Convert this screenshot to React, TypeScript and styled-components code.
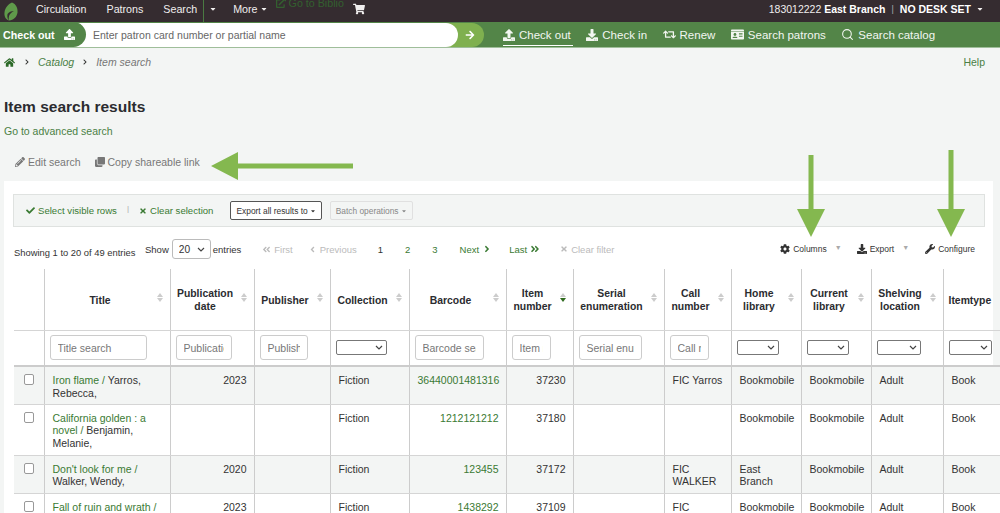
import React from "react";
import styled, { createGlobalStyle } from "styled-components";
import {
  FaHome, FaUpload, FaDownload, FaRetweet, FaIdCard, FaPencilAlt, FaClone, FaCheck, FaTimes,
  FaCog, FaWrench, FaAngleDoubleLeft, FaAngleLeft, FaAngleRight, FaAngleDoubleRight,
  FaShoppingCart, FaExternalLinkAlt, FaArrowRight, FaCaretDown, FaChevronRight,
} from "react-icons/fa";
import { Search } from "lucide-react";

const chevron = `url("data:image/svg+xml,%3Csvg xmlns='http://www.w3.org/2000/svg' width='8' height='5' viewBox='0 0 8 5'%3E%3Cpath d='M1 1l3 3 3-3' fill='none' stroke='%23444' stroke-width='1.2'/%3E%3C/svg%3E")`;

const Global = createGlobalStyle`
  html, body { margin: 0; height: 513px; overflow: hidden; background: #f3f5f4; }
  body { font-family: "Liberation Sans", Arial, sans-serif; font-size: 10.5px; color: #333; }
  * { box-sizing: border-box; }
`;

const Page = styled.div`position: relative; width: 1000px; height: 513px; overflow: hidden;`;

const Nav = styled.nav`
  height: 22px; background: #352c30; color: #f0eeee; display: flex; align-items: center;
  font-size: 10.7px; padding: 0 0 4px 4px;
`;
const Logo = styled.svg`margin-top: 4px; flex: none;`;
const NavItem = styled.span<{ $ml?: number }>`margin-left: ${p => p.$ml ?? 0}px; display: inline-flex; align-items: center; gap: 2px;`;
const NavDivider = styled.span`width: 1px; height: 22px; background: #4a7a42; margin: 4px 0 0 6px;`;
const BiblioLink = styled.span`
  color: #33602f; margin-left: 8px; align-self: flex-start; margin-top: -3px;
  display: inline-flex; align-items: center; gap: 3px; font-size: 10.7px;
`;
const NavRight = styled.div`margin-left: auto; display: flex; align-items: center; padding-right: 16px; font-size: 10.5px;`;
const Strong = styled.b`font-weight: 700; color: #fff;`;
const Pipe = styled.span`margin: 0 6px; color: #aaa; font-size: 9px;`;

const SearchBar = styled.div`
  height: 26px; background: #538548; border-bottom: 1px solid #9fbe9a; display: flex; align-items: center;
`;
const CheckTab = styled.div`
  width: 86px; height: 25px; background: #538548; color: #fff; font-weight: 700; font-size: 10.7px;
  border-radius: 0 13px 13px 0; display: flex; align-items: center; gap: 9px; padding-left: 3px;
  position: relative; z-index: 2; flex: none;
`;
const InputPill = styled.div`
  width: 384px; margin-left: -12px; height: 24px; background: #fff; border-radius: 0 13px 13px 0;
  color: #666; font-size: 10.5px; display: flex; align-items: center; padding-left: 19px;
  position: relative; z-index: 1; flex: none;
`;
const Go = styled.div`
  width: 38px; margin-left: -12px; height: 24px; background: #7fb04f; border-radius: 0 12px 12px 0; color: #fff;
  display: flex; align-items: center; justify-content: flex-end; padding-right: 9px; flex: none;
`;
const Tabs = styled.div`display: flex; margin-left: 19px; gap: 13.5px;`;
const Tab = styled.span<{ $active?: boolean }>`
  color: #f2f6f1; font-size: 11.5px; display: inline-flex; align-items: center; gap: 4px; height: 21px; padding: 0 2px 0 0; margin-top: 1px;
  border-bottom: 1px solid ${p => (p.$active ? "#fff" : "transparent")};
`;

const Crumbs = styled.div`
  height: 49px; display: flex; justify-content: space-between; padding: 7px 15px 0 4px; align-items: flex-start;
`;
const CrumbRow = styled.div`display: flex; align-items: center; gap: 8px; height: 14px; font-style: italic; color: #777;`;
const CrumbSep = styled.span`color: #333; display: inline-flex; font-size: 6px;`;
const GreenI = styled.span`color: #4a7f44;`;
const HomeIcon = styled.span`color: #2c6a28; display: inline-flex; font-size: 11px; margin-right: 1px;`;
const Help = styled.span`color: #4a7f44; margin-top: 1px;`;

const Title = styled.h1`margin: 0 0 0 4px; font-size: 15.5px; line-height: 20px; font-weight: 700; color: #2b2c30;`;
const AdvLink = styled.a`display: block; margin: 7px 0 0 4px; color: #4a7f44; line-height: 14px;`;
const Tools = styled.div`
  display: flex; gap: 14px; color: #777; margin: 17px 0 0 15px; height: 14px; align-items: center;
`;
const Tool = styled.span`display: inline-flex; align-items: center; gap: 3px;`;

const Panel = styled.section`
  margin: 12px 0 0 4px; width: 989px; height: 340px; background: #fff; padding: 13px 0 0 9px;
`;
const ActionBar = styled.div`
  width: 972px; height: 33px; background: #f3f5f4; border: 1px solid #dfe2e0; display: flex; align-items: center;
  padding-left: 12px; color: #3a7a33; font-size: 9.6px;
`;
const ActionLink = styled.span`display: inline-flex; align-items: center; gap: 3px;`;
const BarSep = styled.span`color: #aaa; margin: 0 10px 4px; font-size: 8px;`;
const ActionBtn = styled.span<{ $off?: boolean }>`
  height: 19px; display: inline-flex; align-items: center; gap: 2px; padding: 0 5px; border-radius: 2px; font-size: 8.4px;
  margin-left: ${p => (p.$off ? 8 : 17)}px;
  color: ${p => (p.$off ? "#888" : "#333")};
  background: ${p => (p.$off ? "#f3f5f4" : "#fff")};
  border: 1px solid ${p => (p.$off ? "#e0e0e0" : "#555")};
`;

const Pager = styled.div`
  height: 42px; width: 984px; display: flex; align-items: center; padding: 2px 0 0 1px; font-size: 9.5px;
`;
const Showing = styled.span`font-size: 9.4px; margin-top: 7px; width: 131px; flex: none; white-space: nowrap;`;
const LenSelect = styled.select`
  width: 39px; height: 20px; margin: 0 2px 0 3px; font-size: 10.2px; font-family: inherit; background: #fff ${chevron} no-repeat right 5px center;
  appearance: none; border: 1px solid #bbb; border-radius: 3px; padding: 0 2px 0 6px; color: #333;
`;
const PageLink = styled.span<{ $ml: number; $tone?: "off" | "on" | "cur" }>`
  margin-left: ${p => p.$ml}px; display: inline-flex; align-items: center; gap: 3px; font-size: 9.5px;
  color: ${p => (p.$tone === "off" ? "#bbb" : p.$tone === "cur" ? "#333" : "#3a7a33")};
`;
const Right = styled.div`margin-left: auto; display: flex; align-items: center; font-size: 8.5px; color: #333; padding-right: 22px;`;
const RightItem = styled.span<{ $ml?: number }>`margin-left: ${p => p.$ml ?? 0}px; display: inline-flex; align-items: center; gap: 3px;`;
const Tri = styled.span`color: #aaa; font-size: 7px; margin: -4px 0 0 8px;`;

const Table = styled.table`border-collapse: collapse; table-layout: fixed; width: 987px; margin-left: 1px;`;
const Col = styled.col<{ $w: number }>`width: ${p => p.$w}px;`;
const Th = styled.th`
  height: 61px; position: relative; font-size: 10.4px; line-height: 13px; font-weight: 700; text-align: center;
  padding: 2px 19px 0 5px; border-left: 1px solid #ccc; border-bottom: 1px solid #d5d5d5; color: #2b2c30;
  &:first-child { border-left: 0; }
`;
const SortBox = styled.span`
  position: absolute; right: 7px; top: 24px; width: 6px; height: 12px; display: flex; flex-direction: column; gap: 1px; align-items: center;
`;
const Up = styled.i`width: 0; height: 0; border: 3px solid transparent; border-top: 0; border-bottom: 4px solid #ccc;`;
const Dn = styled.i<{ $on?: boolean }>`width: 0; height: 0; border: 3px solid transparent; border-bottom: 0; border-top: 4px solid ${p => (p.$on ? "#2f6b1e" : "#ccc")};`;
const FilterCell = styled.td`
  height: 36px; padding: 0 5px; border-left: 1px solid #ccc; border-bottom: 2px solid #ccc; vertical-align: middle;
  &:first-child { border-left: 0; }
`;
const FilterInput = styled.input<{ $w: number }>`
  width: ${p => p.$w}px; height: 25px; display: block; border: 1px solid #ccc; border-radius: 3px; padding: 0 7px;
  font: 10.5px "Liberation Sans", Arial, sans-serif; background: #fff;
  &::placeholder { color: #777; }
`;
const FilterSelect = styled.select<{ $w: number }>`
  width: ${p => p.$w}px; height: 15px; display: block; border: 1px solid #777; border-radius: 2px; padding: 0;
  appearance: none; background: #fff ${chevron} no-repeat right 3px center;
`;
const Row = styled.tr<{ $h: number; $alt?: boolean }>`height: ${p => p.$h}px; background: ${p => (p.$alt ? "#f3f5f4" : "#fff")};`;
const Td = styled.td<{ $right?: boolean }>`
  vertical-align: top; padding: 7px 7px 0 8px; line-height: 12.67px; font-size: 10.5px;
  border-left: 1px solid #ccc; border-bottom: 1px solid #d5d5d5; color: #333;
  text-align: ${p => (p.$right ? "right" : "left")};
  &:first-child { border-left: 0; }
`;
const Check = styled.input`display: block; width: 10px; height: 11px; margin: 0 0 0 2px; appearance: none; background: #fff; border: 1px solid #999; border-radius: 2px;`;
const A = styled.span`color: #3a7a33;`;

const Arrows = styled.svg`position: absolute; left: 0; top: 0; width: 1000px; height: 513px; pointer-events: none;`;

const widths = [30, 126, 84, 76, 79, 97, 67, 91, 67, 70, 70, 72, 58];
const headers: string[] = ["Title", "Publication date", "Publisher", "Collection", "Barcode", "Item number", "Serial enumeration", "Call number", "Home library", "Current library", "Shelving location", "Itemtype"];
type F = { ph?: string; w: number };
const filters: F[] = [
  { ph: "Title search", w: 97 }, { ph: "Publication date search", w: 56 }, { ph: "Publisher search", w: 48 }, { w: 51 },
  { ph: "Barcode search", w: 69 }, { ph: "Item number", w: 39 }, { ph: "Serial enumeration", w: 63 }, { ph: "Call number", w: 39 },
  { w: 42 }, { w: 42 }, { w: 44 }, { w: 43 },
];
type R = { h: number; alt?: boolean; t: string; a: string; d?: string; b: string; n: string; c?: string; home: string };
const rows: R[] = [
  { h: 38, alt: true, t: "Iron flame /", a: " Yarros, Rebecca,", d: "2023", b: "36440001481316", n: "37230", c: "FIC Yarros", home: "Bookmobile" },
  { h: 51, t: "California golden : a novel /", a: " Benjamin, Melanie,", b: "1212121212", n: "37180", home: "Bookmobile" },
  { h: 38, alt: true, t: "Don't look for me /", a: " Walker, Wendy,", d: "2020", b: "123455", n: "37172", c: "FIC WALKER", home: "East Branch" },
  { h: 38, t: "Fall of ruin and wrath /", a: "", d: "2023", b: "1438292", n: "37109", c: "FIC", home: "Bookmobile" },
];

export default function App() {
  return (
    <Page>
      <Global />
      <Nav>
        <Logo width="14" height="19" viewBox="0 0 14 19">
          <path d="M8 .5C12 2 14 6 13.5 10.5 13 15 9.5 18 5 18.5 1.5 17.5 0 14 .5 10.5 1 6 4 2 8 .5Z" fill="#5f9a4a" />
          <path d="M5 18.5C4 14 6 11 10 9 7 9 5 10 3.5 12 3 15 3.5 17 5 18.5Z" fill="#352c30" />
        </Logo>
        <NavItem $ml={18}>Circulation</NavItem>
        <NavItem $ml={20}>Patrons</NavItem>
        <NavItem $ml={20}>Search</NavItem>
        <NavDivider />
        <NavItem $ml={5}><FaCaretDown size={8} /></NavItem>
        <NavItem $ml={16}>More <FaCaretDown size={8} /></NavItem>
        <BiblioLink><FaExternalLinkAlt size={10} /> Go to Biblio</BiblioLink>
        <NavItem $ml={9}><FaShoppingCart size={12} /></NavItem>
        <NavRight>
          <span>183012222&nbsp;</span><Strong>East Branch</Strong><Pipe>|</Pipe><Strong>NO DESK SET</Strong>
          <NavItem $ml={5}><FaCaretDown size={8} /></NavItem>
        </NavRight>
      </Nav>
      <SearchBar>
        <CheckTab>Check out <FaUpload size={11} /></CheckTab>
        <InputPill>Enter patron card number or partial name</InputPill>
        <Go><FaArrowRight size={10} /></Go>
        <Tabs>
          <Tab $active><FaUpload size={12} /> Check out</Tab>
          <Tab><FaDownload size={12} /> Check in</Tab>
          <Tab><FaRetweet size={13} /> Renew</Tab>
          <Tab><FaIdCard size={13} /> Search patrons</Tab>
          <Tab><Search size={13} /> Search catalog</Tab>
        </Tabs>
      </SearchBar>
      <Crumbs>
        <CrumbRow>
          <HomeIcon><FaHome /></HomeIcon>
          <CrumbSep><FaChevronRight /></CrumbSep>
          <GreenI>Catalog</GreenI>
          <CrumbSep><FaChevronRight /></CrumbSep>
          <span>Item search</span>
        </CrumbRow>
        <Help>Help</Help>
      </Crumbs>
      <Title>Item search results</Title>
      <AdvLink>Go to advanced search</AdvLink>
      <Tools>
        <Tool><FaPencilAlt size={10} /> Edit search</Tool>
        <Tool><FaClone size={10} /> Copy shareable link</Tool>
      </Tools>
      <Panel>
        <ActionBar>
          <ActionLink><FaCheck size={9} /> Select visible rows</ActionLink>
          <BarSep>|</BarSep>
          <ActionLink><FaTimes size={8} /> Clear selection</ActionLink>
          <ActionBtn>Export all results to <FaCaretDown size={6} /></ActionBtn>
          <ActionBtn $off>Batch operations <FaCaretDown size={6} /></ActionBtn>
        </ActionBar>
        <Pager>
          <Showing>Showing 1 to 20 of 49 entries</Showing>
          <span>Show</span>
          <LenSelect defaultValue="20"><option>20</option></LenSelect>
          <span>entries</span>
          <PageLink $ml={21} $tone="off"><FaAngleDoubleLeft size={9} />First</PageLink>
          <PageLink $ml={15} $tone="off"><FaAngleLeft size={9} /> Previous</PageLink>
          <PageLink $ml={21} $tone="cur">1</PageLink>
          <PageLink $ml={22}>2</PageLink>
          <PageLink $ml={22}>3</PageLink>
          <PageLink $ml={22}>Next <FaAngleRight size={10} /></PageLink>
          <PageLink $ml={17}>Last <FaAngleDoubleRight size={10} /></PageLink>
          <PageLink $ml={20} $tone="off"><FaTimes size={8} /> Clear filter</PageLink>
          <Right>
            <RightItem><FaCog size={10} /> Columns</RightItem><Tri>▼</Tri>
            <RightItem $ml={15}><FaDownload size={10} /> Export</RightItem><Tri>▼</Tri>
            <RightItem $ml={16}><FaWrench size={10} /> Configure</RightItem>
          </Right>
        </Pager>
        <Table>
          <colgroup>{widths.map((w, i) => <Col key={i} $w={w} />)}</colgroup>
          <thead>
            <tr>
              <Th />
              {headers.map(h => (
                <Th key={h}>
                  {h}
                  {h !== "Itemtype" && <SortBox><Up /><Dn $on={h === "Item number"} /></SortBox>}
                </Th>
              ))}
            </tr>
            <tr>
              <FilterCell />
              {filters.map((f, i) => (
                <FilterCell key={i}>
                  {f.ph ? <FilterInput $w={f.w} placeholder={f.ph} readOnly /> : <FilterSelect $w={f.w} />}
                </FilterCell>
              ))}
            </tr>
          </thead>
          <tbody>
            {rows.map(r => (
              <Row key={r.n} $h={r.h} $alt={r.alt}>
                <Td><Check type="checkbox" /></Td>
                <Td><A>{r.t}</A>{r.a}</Td>
                <Td $right>{r.d}</Td>
                <Td />
                <Td>Fiction</Td>
                <Td $right><A>{r.b}</A></Td>
                <Td $right>{r.n}</Td>
                <Td />
                <Td>{r.c}</Td>
                <Td>{r.home}</Td>
                <Td>Bookmobile</Td>
                <Td>Adult</Td>
                <Td>Book</Td>
              </Row>
            ))}
          </tbody>
        </Table>
      </Panel>
      <Arrows viewBox="0 0 1000 513">
        <polygon fill="#84b84f" points="211,166 238,152 238,163.5 353,163.5 353,168.5 238,168.5 238,180" />
        <polygon fill="#84b84f" points="808.5,155 813.5,155 813.5,209 825,209 811,237 797,209 808.5,209" />
        <polygon fill="#84b84f" points="948.5,150 953.5,150 953.5,209 965,209 951,237 937,209 948.5,209" />
      </Arrows>
    </Page>
  );
}
